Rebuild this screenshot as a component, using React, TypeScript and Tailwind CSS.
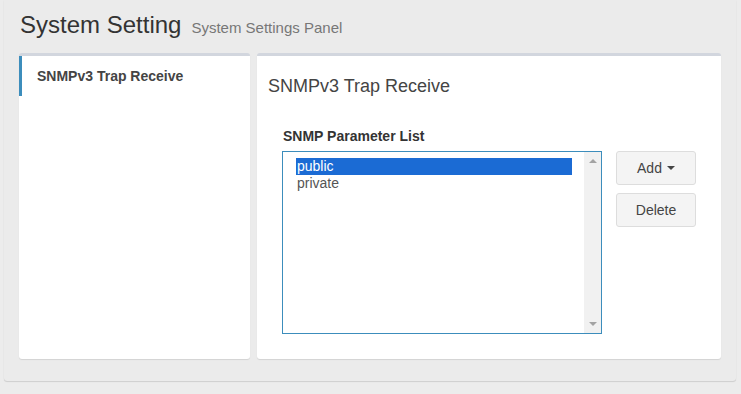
import React from "react";

const options = ["public", "private"];

function Caret({ up }: { up?: boolean }) {
  return (
    <span
      className={
        up
          ? "block w-0 h-0 border-x-[4px] border-x-transparent border-b-[4px] border-b-[#a3a3a3]"
          : "block w-0 h-0 border-x-[4px] border-x-transparent border-t-[4px] border-t-[#a3a3a3]"
      }
    />
  );
}

export default function App() {
  return (
    <div className="h-screen bg-[#ececec] font-['Liberation_Sans',Arial,sans-serif] text-[#333]">
      <div className="ml-[4px] w-[732px] h-[381px] px-[15px] bg-[#ebebeb] rounded-b-[3px] shadow-[0_1px_1px_rgba(0,0,0,0.12),0_0_1px_rgba(0,0,0,0.1)]">
        {/* header */}
        <div className="flex items-baseline gap-[10px] pt-[13px] pl-px">
          <h1 className="text-[24px] leading-[24px] text-[#333]">System Setting</h1>
          <span className="text-[15px] leading-[15px] text-[#777]">System Settings Panel</span>
        </div>

        <div className="flex gap-[7px] mt-[16px] h-[306px]">
          {/* side nav */}
          <div className="w-[231px] bg-white rounded-[3px] border-t-[3px] border-[#d2d6de] shadow-[0_1px_1px_rgba(0,0,0,0.1)]">
            <div className="border-l-[3px] border-[#3c8dbc] pl-[15px] py-[10px] text-[14px] leading-[20px] font-bold text-[#444]">
              SNMPv3 Trap Receive
            </div>
          </div>

          {/* main panel */}
          <div className="w-[464px] bg-white rounded-[3px] border-t-[3px] border-[#d2d6de] shadow-[0_1px_1px_rgba(0,0,0,0.1)]">
            <h3 className="pl-[11px] pt-[21px] text-[18px] leading-[18px] text-[#444]">SNMPv3 Trap Receive</h3>

            <div className="pl-[25px] mt-[31px]">
              <label className="block pl-px text-[14px] leading-[20px] font-bold text-[#333]">SNMP Parameter List</label>
              <div className="flex items-start mt-[5px]">
                <div className="flex w-[320px] h-[183px] border border-[#3c8dbc]">
                  <div className="flex-1 pt-[6px] pl-[13px] pr-[12px] text-[14px] leading-[17px]">
                    {options.map((o, i) => (
                      <div
                        key={o}
                        className={i === 0 ? "h-[17px] pl-px bg-[#1b6bd4] text-white" : "h-[17px] pl-px text-[#555]"}
                      >
                        {o}
                      </div>
                    ))}
                  </div>
                  <div className="w-[17px] bg-[#f1f1f1] flex flex-col items-center justify-between py-[7px]">
                    <Caret up />
                    <Caret />
                  </div>
                </div>

                <div className="ml-[14px] flex flex-col gap-[8px]">
                  <button className="w-[80px] h-[34px] flex items-center justify-center gap-[5px] bg-[#f4f4f4] border border-[#ddd] rounded-[3px] text-[14px] text-[#444]">
                    Add
                    <span className="block w-0 h-0 border-x-[4px] border-x-transparent border-t-[4px] border-t-[#444]" />
                  </button>
                  <button className="w-[80px] h-[34px] flex items-center justify-center bg-[#f4f4f4] border border-[#ddd] rounded-[3px] text-[14px] text-[#444]">
                    Delete
                  </button>
                </div>
              </div>
            </div>
          </div>
        </div>
      </div>
    </div>
  );
}
